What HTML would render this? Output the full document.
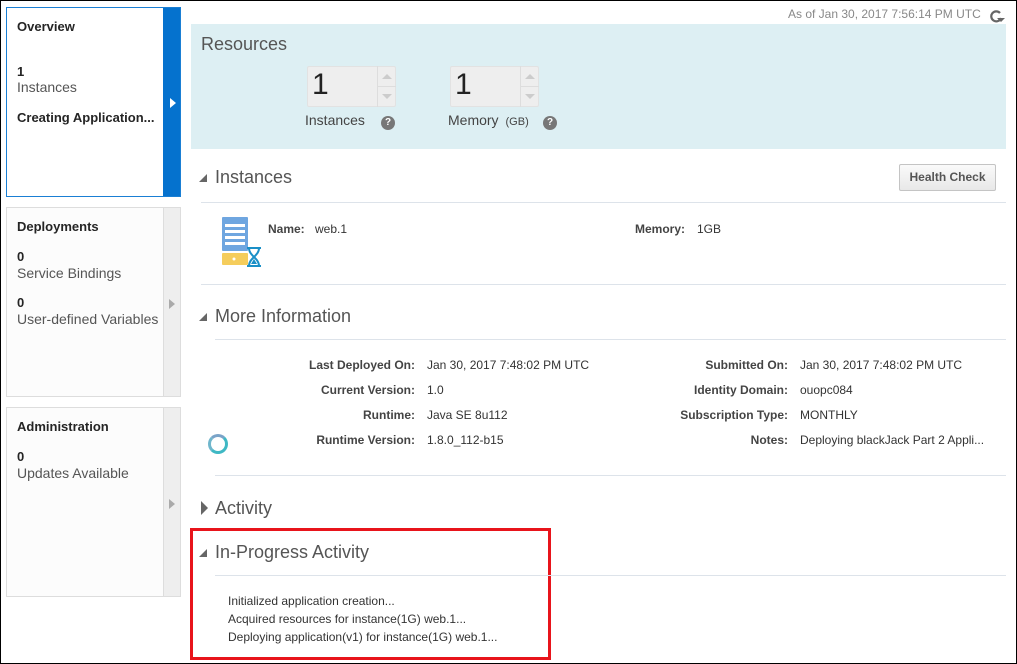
<!DOCTYPE html>
<html><head><style>
*{margin:0;padding:0;box-sizing:border-box}
body{width:1017px;height:664px;position:relative;background:#fff;font-family:"Liberation Sans",sans-serif;color:#333;overflow:hidden}
.a{position:absolute;white-space:nowrap}
.panel{position:absolute;left:6px;width:175px;border:1px solid #ddd;background:#fcfcfc}
.strip{position:absolute;right:0;top:0;bottom:0;width:17px;background:#eee;border-left:1px solid #ddd}
.pt{font-weight:bold;font-size:13px;color:#252525}
.pn{font-size:13px;color:#252525;font-weight:bold}
.pl{font-size:14px;color:#555}
.h{font-size:18px;color:#555}
.line{position:absolute;height:1px;background:#dde3ea}
.lbl{font-size:12px;font-weight:bold;color:#444;text-align:right}
.val{font-size:12px;color:#333}
</style></head><body>
<div class="a" style="left:0;top:0;width:1017px;height:664px;border:1px solid #000;z-index:5"></div>
<!-- Overview -->
<div class="panel" style="top:7px;height:190px;border-color:#1a7fd4;background:#fff">
<div class="strip" style="background:#0572ce;border:none;width:17px"></div>
<div class="a" style="right:4px;top:90px;width:0;height:0;border-left:6px solid #fff;border-top:5px solid transparent;border-bottom:5px solid transparent"></div>
<div class="a pt" style="left:10px;top:11px">Overview</div>
<div class="a pn" style="left:10px;top:56px">1</div>
<div class="a pl" style="left:10px;top:71px">Instances</div>
<div class="a pt" style="left:10px;top:102px">Creating Application...</div>
</div>
<div class="panel" style="top:207px;height:190px">
<div class="strip"></div>
<div class="a" style="right:5px;top:91px;border-left:6px solid #aaa;border-top:5px solid transparent;border-bottom:5px solid transparent"></div>
<div class="a pt" style="left:10px;top:11px">Deployments</div>
<div class="a pn" style="left:10px;top:41px">0</div>
<div class="a pl" style="left:10px;top:57px">Service Bindings</div>
<div class="a pn" style="left:10px;top:87px">0</div>
<div class="a pl" style="left:10px;top:103px">User-defined Variables</div>
</div>
<div class="panel" style="top:407px;height:190px">
<div class="strip"></div>
<div class="a" style="right:5px;top:91px;border-left:6px solid #aaa;border-top:5px solid transparent;border-bottom:5px solid transparent"></div>
<div class="a pt" style="left:10px;top:11px">Administration</div>
<div class="a pn" style="left:10px;top:41px">0</div>
<div class="a pl" style="left:10px;top:57px">Updates Available</div>
</div>

<div class="a" style="left:788px;top:7px;font-size:12px;color:#888">As of Jan 30, 2017 7:56:14 PM UTC</div>
<svg class="a" style="left:989px;top:9px" width="16" height="14" viewBox="0 0 16 14"><path d="M11 4A5 5 0 1 0 12 9" fill="none" stroke="#666" stroke-width="2.2"/><path d="M8 9l4 4 4-4z" fill="#666"/></svg>

<div class="a" style="left:191px;top:24px;width:815px;height:125px;background:#ddeff3"></div>
<div class="a" style="left:201px;top:34px;font-size:18px;color:#555">Resources</div>
<div class="a" style="left:307px;top:66px;width:89px;height:41px;background:#eee;border:1px solid #e2e2e2;border-radius:2px"></div>
<div class="a" style="left:377px;top:66px;width:1px;height:41px;background:#ddd"></div>
<div class="a" style="left:377px;top:86px;width:19px;height:1px;background:#ddd"></div>
<div class="a" style="left:382px;top:74px;border-bottom:5px solid #ccc;border-left:5px solid transparent;border-right:5px solid transparent"></div>
<div class="a" style="left:382px;top:94px;border-top:5px solid #ccc;border-left:5px solid transparent;border-right:5px solid transparent"></div>
<div class="a" style="left:312px;top:68px;font-size:30px;color:#222">1</div>
<div class="a" style="left:305px;top:112px;font-size:14px;color:#444">Instances</div>
<div class="a" style="left:381px;top:116px;width:14px;height:14px;border-radius:50%;background:#777;color:#fff;font-size:10px;font-weight:bold;text-align:center;line-height:14px">?</div>

<div class="a" style="left:450px;top:66px;width:89px;height:41px;background:#eee;border:1px solid #e2e2e2;border-radius:2px"></div>
<div class="a" style="left:520px;top:66px;width:1px;height:41px;background:#ddd"></div>
<div class="a" style="left:520px;top:86px;width:19px;height:1px;background:#ddd"></div>
<div class="a" style="left:525px;top:74px;border-bottom:5px solid #ccc;border-left:5px solid transparent;border-right:5px solid transparent"></div>
<div class="a" style="left:525px;top:94px;border-top:5px solid #ccc;border-left:5px solid transparent;border-right:5px solid transparent"></div>
<div class="a" style="left:455px;top:68px;font-size:30px;color:#222">1</div>
<div class="a" style="left:448px;top:112px;font-size:14px;color:#444">Memory <span style="font-size:11px">&nbsp;(GB)</span></div>
<div class="a" style="left:543px;top:116px;width:14px;height:14px;border-radius:50%;background:#777;color:#fff;font-size:10px;font-weight:bold;text-align:center;line-height:14px">?</div>

<!-- Instances -->
<div class="a" style="left:199px;top:174px;border-bottom:8px solid #666;border-left:8px solid transparent"></div>
<div class="a h" style="left:215px;top:167px">Instances</div>
<div class="a" style="left:899px;top:164px;width:97px;height:27px;border:1px solid #c4c4c4;border-radius:2px;background:linear-gradient(#fafafa,#e8e8e8);font-size:12px;font-weight:bold;color:#555;text-align:center;line-height:25px">Health Check</div>
<div class="line" style="left:201px;top:202px;width:805px"></div>
<svg class="a" style="left:221px;top:217px" width="42" height="52" viewBox="0 0 42 52">
<rect x="1" y="0" width="26" height="34" rx="1" fill="#6fa6e0"/>
<rect x="4" y="7" width="20" height="3" fill="#fff"/><rect x="4" y="13" width="20" height="3" fill="#fff"/><rect x="4" y="19" width="20" height="3" fill="#fff"/><rect x="4" y="25" width="20" height="3" fill="#fff"/>
<rect x="1" y="36" width="26" height="12" rx="1" fill="#f5cd5c"/><circle cx="13" cy="42" r="1.5" fill="#fff"/>
<path d="M26 31h14M26 49h14M28 31c0 8 10 10 10 18M38 31c0 8-10 10-10 18" fill="none" stroke="#1a8fc7" stroke-width="2"/>
<path d="M30 47l3-5 3 5z" fill="#1a8fc7"/>
</svg>
<div class="a lbl" style="left:268px;top:222px">Name:</div>
<div class="a val" style="left:315px;top:222px">web.1</div>
<div class="a lbl" style="left:635px;top:222px">Memory:</div>
<div class="a val" style="left:697px;top:222px">1GB</div>
<div class="line" style="left:201px;top:284px;width:805px"></div>

<!-- More info -->
<div class="a" style="left:199px;top:313px;border-bottom:8px solid #666;border-left:8px solid transparent"></div>
<div class="a h" style="left:215px;top:306px">More Information</div>
<div class="line" style="left:215px;top:339px;width:791px"></div>
<div class="a lbl" style="left:215px;width:200px;top:358px">Last Deployed On:</div><div class="a val" style="left:427px;top:358px">Jan 30, 2017 7:48:02 PM UTC</div>
<div class="a lbl" style="left:215px;width:200px;top:383px">Current Version:</div><div class="a val" style="left:427px;top:383px">1.0</div>
<div class="a lbl" style="left:215px;width:200px;top:408px">Runtime:</div><div class="a val" style="left:427px;top:408px">Java SE 8u112</div>
<div class="a lbl" style="left:215px;width:200px;top:433px">Runtime Version:</div><div class="a val" style="left:427px;top:433px">1.8.0_112-b15</div>
<div class="a lbl" style="left:588px;width:200px;top:358px">Submitted On:</div><div class="a val" style="left:800px;top:358px">Jan 30, 2017 7:48:02 PM UTC</div>
<div class="a lbl" style="left:588px;width:200px;top:383px">Identity Domain:</div><div class="a val" style="left:800px;top:383px">ouopc084</div>
<div class="a lbl" style="left:588px;width:200px;top:408px">Subscription Type:</div><div class="a val" style="left:800px;top:408px">MONTHLY</div>
<div class="a lbl" style="left:588px;width:200px;top:433px">Notes:</div><div class="a val" style="left:800px;top:433px">Deploying blackJack Part 2 Appli...</div>
<div class="a" style="left:208px;top:434px;width:20px;height:20px;border-radius:50%;border:3px solid #3fb8c4;border-top-color:#7aa3c8;border-left-color:#6fb6cc"></div>
<div class="line" style="left:215px;top:475px;width:791px"></div>

<div class="a" style="left:201px;top:501px;border-left:7px solid #666;border-top:7px solid transparent;border-bottom:7px solid transparent"></div>
<div class="a h" style="left:215px;top:498px">Activity</div>

<div class="a" style="left:190px;top:528px;width:361px;height:132px;border:3px solid #e8141b"></div>
<div class="a" style="left:199px;top:549px;border-bottom:8px solid #666;border-left:8px solid transparent"></div>
<div class="a h" style="left:215px;top:542px">In-Progress Activity</div>
<div class="line" style="left:215px;top:575px;width:791px"></div>
<div class="a val" style="left:228px;top:594px">Initialized application creation...</div>
<div class="a val" style="left:228px;top:612px">Acquired resources for instance(1G) web.1...</div>
<div class="a val" style="left:228px;top:630px">Deploying application(v1) for instance(1G) web.1...</div>
</body></html>
